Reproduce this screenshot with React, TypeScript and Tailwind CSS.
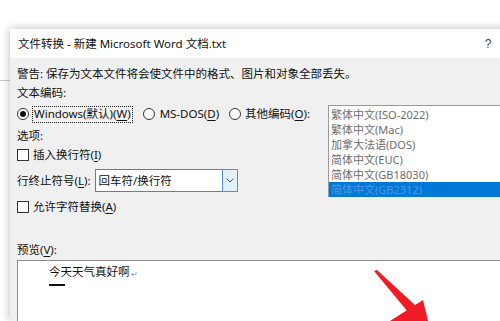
import React from "react";

const font = { fontFamily: '"Noto Sans", "Noto Sans CJK SC", sans-serif' };

function U({ children }: { children: React.ReactNode }) {
  return <span className="underline underline-offset-2">{children}</span>;
}

function Radio({ checked }: { checked?: boolean }) {
  return (
    <span className="w-[12px] h-[12px] rounded-full border border-[#333] bg-white flex items-center justify-center shrink-0">
      {checked && <span className="w-[6px] h-[6px] rounded-full bg-[#111]" />}
    </span>
  );
}

function Check() {
  return <span className="w-[12px] h-[12px] border border-[#333] bg-white shrink-0" />;
}

const encodings = [
  "繁体中文(ISO-2022)",
  "繁体中文(Mac)",
  "加拿大法语(DOS)",
  "简体中文(EUC)",
  "简体中文(GB18030)",
  "简体中文(GB2312)",
];

export default function App() {
  return (
    <div className="relative w-[500px] h-[321px] bg-white overflow-hidden text-[#111]" style={font}>
      {/* background window edge behind the dialog */}
      <div className="absolute left-0 top-[80px] w-[10px] h-px bg-[#c8c8c8]" />

      <div className="relative ml-[10px] mt-[29px] w-[530px] h-[292px] bg-[#f0f0f0] shadow-[0_0_9px_rgba(0,0,0,0.28)] flex flex-col">
        {/* Title bar */}
        <div className="h-[29px] bg-white flex items-center text-[11.5px]">
          <span className="w-[473px] pl-[8px]">文件转换 - 新建 Microsoft Word 文档.txt</span>
          <span className="w-[10px] text-center text-[#444] text-[12px] font-['Liberation_Sans',sans-serif]">?</span>
        </div>

        <div className="flex-1 flex flex-col pl-[7px] text-[11.5px] leading-[16px]">
          <div className="mt-[8px] h-[16px]">警告: 保存为文本文件将会使文件中的格式、图片和对象全部丢失。</div>
          <div className="mt-[3px] h-[16px]">文本编码:</div>

          <div className="mt-[4px] flex items-start">
            {/* left column */}
            <div className="w-[311px] flex flex-col">
              <div className="h-[18px] flex items-center">
                <Radio checked />
                <span className="ml-[3px] h-[17px] px-[1px] border border-dotted border-[#222] flex items-center">
                  Windows(默认)(<U>W</U>)
                </span>
                <span className="ml-[10px]"><Radio /></span>
                <span className="ml-[5px]">MS-DOS(<U>D</U>)</span>
                <span className="ml-[10px]"><Radio /></span>
                <span className="ml-[4px]">其他编码(<U>O</U>):</span>
              </div>
              <div className="mt-[5px] h-[16px]">选项:</div>
              <div className="mt-[3px] h-[16px] flex items-center">
                <Check />
                <span className="ml-[4px]">插入换行符(<U>I</U>)</span>
              </div>
              <div className="mt-[6px] h-[23px] flex items-center">
                <span>行终止符号(<U>L</U>):</span>
                <div className="ml-[4px] w-[143px] h-[23px] border border-[#7a7a7a] bg-white flex items-center">
                  <span className="flex-1 pl-[3px]">回车符/换行符</span>
                  <span className="w-[16px] h-[23px] -my-px -mr-px border border-[#4d94d6] bg-[#e3effb] flex items-center justify-center">
                    <svg width="8" height="5" viewBox="0 0 8 5">
                      <path d="M0.5 0.5 L4 4 L7.5 0.5" fill="none" stroke="#555" strokeWidth="1" />
                    </svg>
                  </span>
                </div>
              </div>
              <div className="mt-[7px] h-[16px] flex items-center">
                <Check />
                <span className="ml-[4px]">允许字符替换(<U>A</U>)</span>
              </div>
            </div>

            {/* encoding list */}
            <div className="flex-1 h-[92px] border border-r-0 border-[#9a9a9a] bg-white pt-px text-[#6d6d6d] text-[11px]">
              {encodings.map((e, i) => (
                <div
                  key={e}
                  className={
                    i === encodings.length - 1
                      ? "h-[15px] leading-[15px] pl-[2px] bg-[#0078d7] text-[#4e98e0]"
                      : "h-[15px] leading-[15px] pl-[2px]"
                  }
                >
                  {e}
                </div>
              ))}
            </div>
          </div>

          <div className="mt-[27px] h-[16px]">预览(<U>V</U>):</div>
          <div className="mt-[2px] flex-1 border border-r-0 border-b-0 border-[#8e8e8e] bg-white pl-[31px] pt-[3px]">
            <div className="flex items-center h-[16px]">
              <span>今天天气真好啊</span>
              <span className="text-[8px] text-[#888] ml-px mt-[3px]">↵</span>
            </div>
            <div className="mt-[4px] w-[16px] h-[2px] bg-[#111]" />
          </div>
        </div>
      </div>

      {/* red arrow annotation */}
      <svg className="absolute left-0 top-0" width="500" height="321" viewBox="0 0 500 321">
        <polygon points="374,271 377,270 415,305 408,312" fill="#ee1c25" />
        <polygon points="390,321 423,300 434,345" fill="#ee1c25" />
      </svg>
    </div>
  );
}
